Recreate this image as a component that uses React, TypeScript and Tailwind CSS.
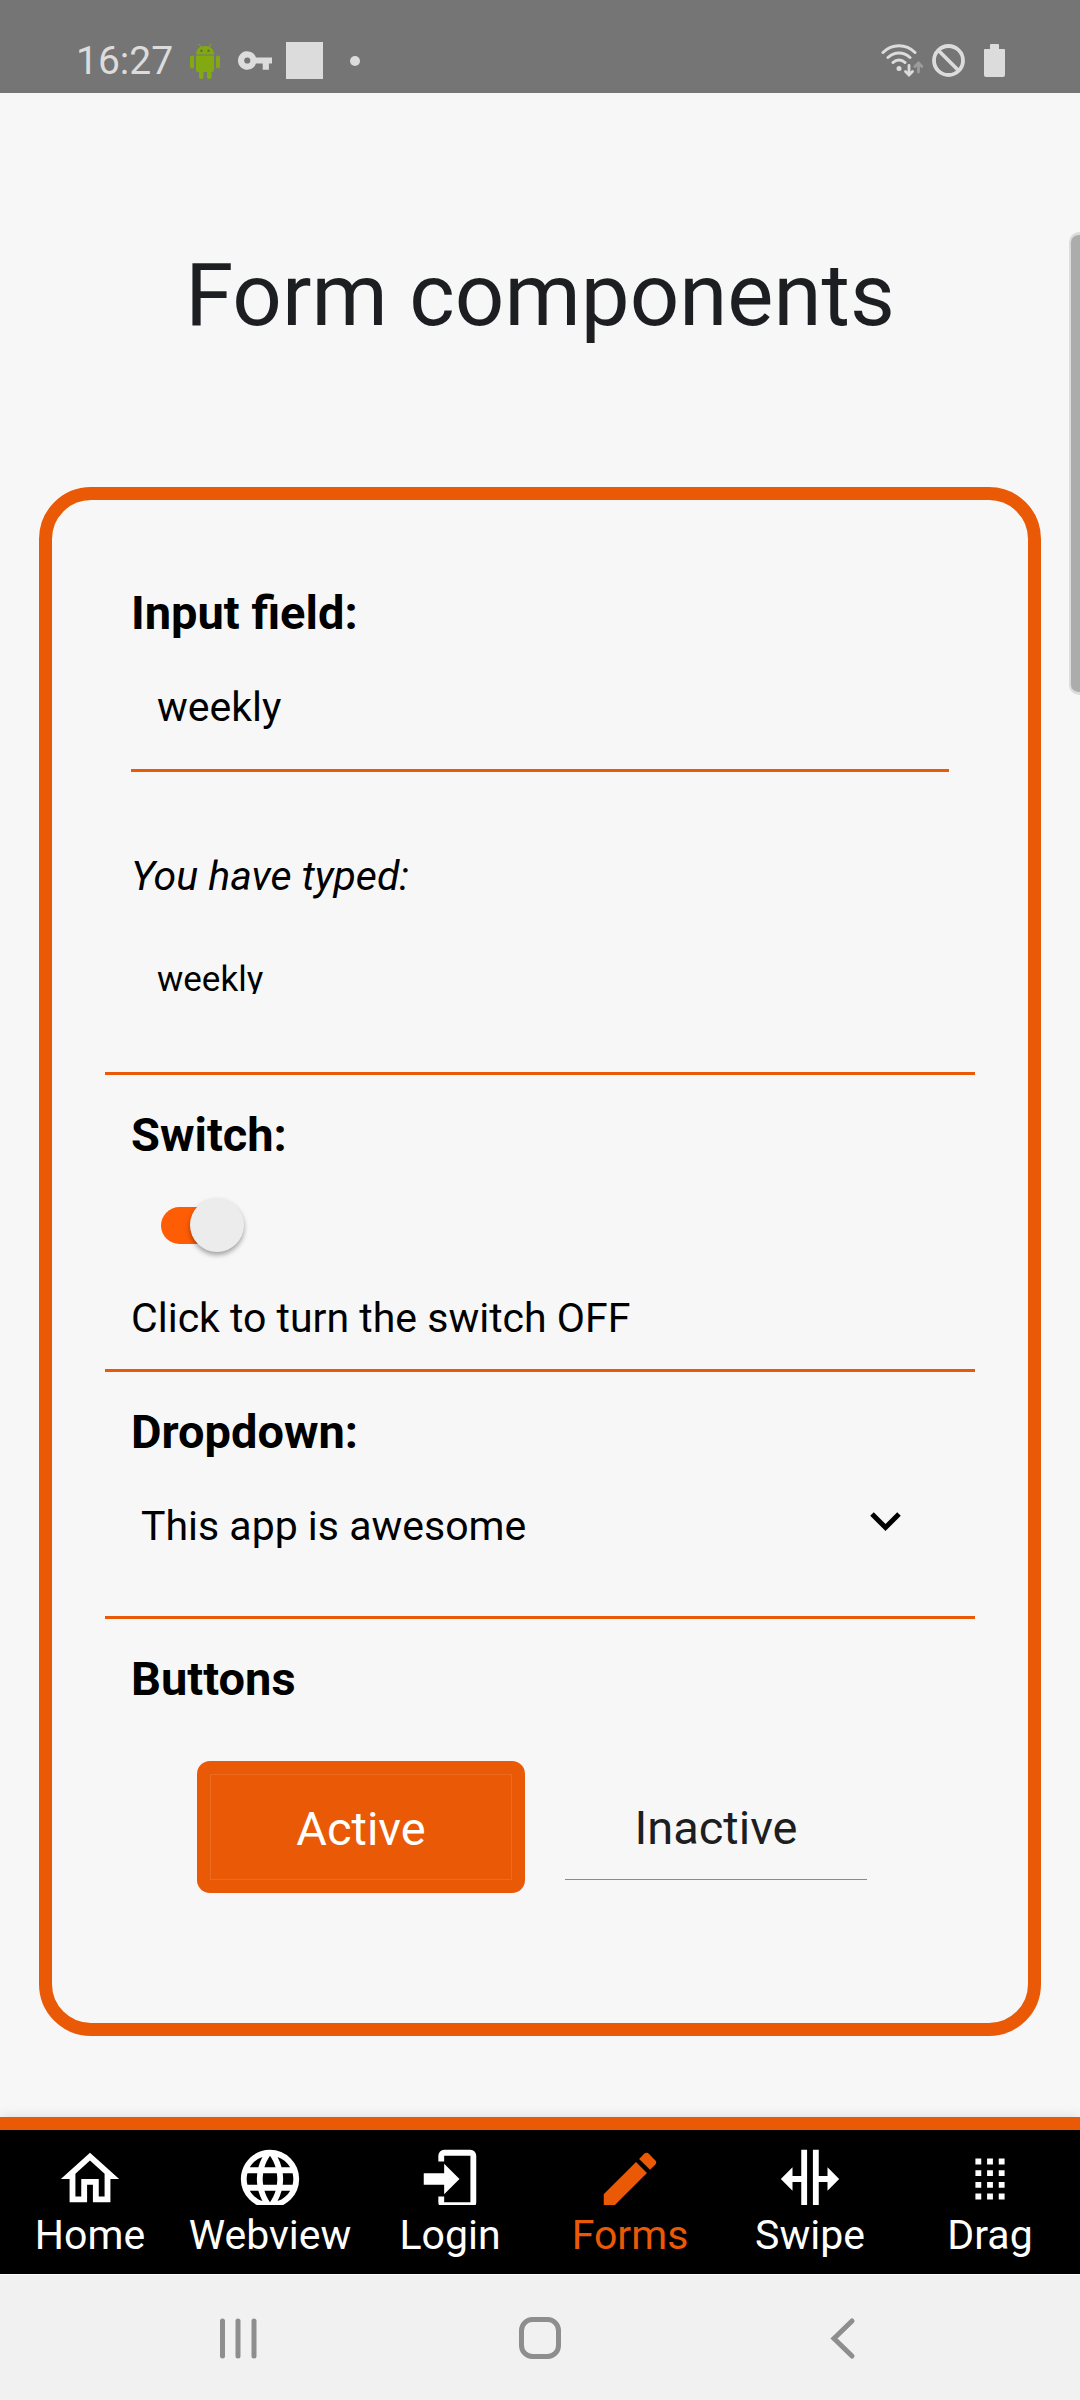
import { useState } from "react";
import type { ReactNode } from "react";

const tabs = [
  {
    label: "Home",
    path: "M12 5.69l5 4.5V18h-2v-6H9v6H7v-7.81l5-4.5M12 3L2 12h3v8h6v-6h2v6h6v-8h3L12 3z",
  },
  {
    label: "Webview",
    path: "M16.36,14C16.44,13.34 16.5,12.68 16.5,12C16.5,11.32 16.44,10.66 16.36,10H19.74C19.9,10.64 20,11.31 20,12C20,12.69 19.9,13.36 19.74,14M14.59,19.56C15.19,18.45 15.65,17.25 15.97,16H18.92C17.96,17.65 16.43,18.93 14.59,19.56M14.34,14H9.66C9.56,13.34 9.5,12.68 9.5,12C9.5,11.32 9.56,10.65 9.66,10H14.34C14.43,10.65 14.5,11.32 14.5,12C14.5,12.68 14.43,13.34 14.34,14M12,19.96C11.17,18.76 10.5,17.43 10.09,16H13.91C13.5,17.43 12.83,18.76 12,19.96M8,8H5.08C6.03,6.34 7.57,5.06 9.4,4.44C8.8,5.55 8.35,6.75 8,8M5.08,16H8C8.35,17.25 8.8,18.45 9.4,19.56C7.57,18.93 6.03,17.65 5.08,16M4.26,14C4.1,13.36 4,12.69 4,12C4,11.31 4.1,10.64 4.26,10H7.64C7.56,10.66 7.5,11.32 7.5,12C7.5,12.68 7.56,13.34 7.64,14M12,4.03C12.83,5.23 13.5,6.57 13.91,8H10.09C10.5,6.57 11.17,5.23 12,4.03M18.92,8H15.97C15.65,6.75 15.19,5.55 14.59,4.44C16.43,5.07 17.96,6.34 18.92,8M12,2C6.47,2 2,6.5 2,12A10,10 0 0,0 12,22A10,10 0 0,0 22,12A10,10 0 0,0 12,2Z",
  },
  {
    label: "Login",
    path: "M10,17.25V14H3V10H10V6.75L15.25,12L10,17.25M10,2H19A2,2 0 0,1 21,4V20A2,2 0 0,1 19,22H10A2,2 0 0,1 8,20V18H10V20H19V4H10V6H8V4A2,2 0 0,1 10,2Z",
  },
  {
    label: "Forms",
    path: "M20.71,7.04C21.1,6.65 21.1,6 20.71,5.63L18.37,3.29C18,2.9 17.35,2.9 16.96,3.29L15.12,5.12L18.87,8.87M3,17.25V21H6.75L17.81,9.93L14.06,6.18L3,17.25Z",
  },
  {
    label: "Swipe",
    path: "M18,16V13H15V22H13V2H15V11H18V8L22,12L18,16M2,12L6,16V13H9V22H11V2H9V11H6V8L2,12Z",
  },
  {
    label: "Drag",
    path: "M7 5h2v2H7zM11 5h2v2h-2zM15 5h2v2h-2zM7 9h2v2H7zM11 9h2v2h-2zM15 9h2v2h-2zM7 13h2v2H7zM11 13h2v2h-2zM15 13h2v2h-2zM7 17h2v2H7zM11 17h2v2h-2zM15 17h2v2h-2z",
  },
];

function StatusBar() {
  return (
    <header className="flex h-[93px] items-end justify-between bg-[#757575] pr-[75px] pb-[14px] pl-[76px] text-[#dcdcdc]">
      <div className="flex h-[37px] items-center">
        <span className="mr-[17px] text-[39px] leading-[40px]">16:27</span>
        <svg viewBox="0 0 30 36" className="mr-[18px] h-[36px] w-[30px]" fill="#82a910" aria-hidden="true">
          <path d="M6 11.5C6 6 10 3 15 3s9 3 9 8.500z" />
          <path d="M9 .8l2.500 4M21 .8l-2.500 4" stroke="#82a910" strokeWidth="1" />
          <circle cx="11.500" cy="7.800" r="1.200" fill="#5d6e3c" />
          <circle cx="18.500" cy="7.800" r="1.200" fill="#5d6e3c" />
          <path d="M6 12.500h18V27a2 2 0 0 1-2 2H8a2 2 0 0 1-2-2z" />
          <rect x="0" y="12.500" width="4" height="13" rx="2" />
          <rect x="26" y="12.500" width="4" height="13" rx="2" />
          <rect x="9" y="26" width="4.500" height="10" rx="2" />
          <rect x="17" y="26" width="4.500" height="10" rx="2" />
        </svg>
        <svg viewBox="1 6 22 12" className="mr-[14px] h-[19px] w-[34px]" fill="currentColor" aria-hidden="true">
          <path d="M12.650 10A6 6 0 1 0 12.650 14H17v4h4v-4h2v-4zM7 14a2 2 0 1 1 0-4 2 2 0 0 1 0 4z" />
        </svg>
        <span className="mr-[27px] size-[37px] bg-[#dcdcdc]" />
        <span className="size-[10px] rounded-full bg-[#dcdcdc]" />
      </div>
      <div className="flex h-[37px] items-center">
        <svg viewBox="0 0 42 33" className="mr-[9px] h-[33px] w-[42px]" fill="none" stroke="currentColor" strokeLinecap="round" aria-hidden="true">
          <path d="M2 8.500C11-.5 25-.5 34 8.500M7 13.500c6.500-6 15.500-6 22 0M12 18.500c3.500-3.500 8.500-3.500 12 0" strokeWidth="3" />
          <circle cx="18" cy="24.500" r="2.500" fill="currentColor" stroke="none" />
          <path d="M28 21.500v9M24.500 27.500l3.500 3.500 3.500-3.500" strokeWidth="2.800" />
          <path d="M37.500 28v-8M34 22.500l3.500-3.500 3.500 3.500" strokeWidth="2.800" stroke="#9c9c9c" />
        </svg>
        <svg viewBox="0 0 33 33" className="mr-[19px] size-[33px]" fill="none" stroke="currentColor" strokeWidth="3.800" aria-hidden="true">
          <circle cx="16.500" cy="16.500" r="14.500" />
          <path d="M6.500 6.500l20 20" />
        </svg>
        <svg viewBox="0 0 21 33" className="h-[33px] w-[21px]" fill="currentColor" aria-hidden="true">
          <path d="M6 5V1a1 1 0 0 1 1-1h7a1 1 0 0 1 1 1v4h5a1 1 0 0 1 1 1v25a2 2 0 0 1-2 2H2a2 2 0 0 1-2-2V6a1 1 0 0 1 1-1z" />
        </svg>
      </div>
    </header>
  );
}

function Section({ children, last = false }: { children: ReactNode; last?: boolean }) {
  return (
    <section className={last ? "px-[26px] pt-8 pb-[130px]" : "border-b-3 border-[#ea5906] px-[26px] pt-8"}>
      {children}
    </section>
  );
}

const labelClass = "block text-[47px] leading-[56px] font-bold";

export default function App() {
  const [text, setText] = useState("weekly");
  const [on, setOn] = useState(true);

  return (
    <div className="relative flex min-h-screen flex-col bg-[#f7f7f7] font-['Roboto',sans-serif] text-black">
      <StatusBar />
      <main className="flex-1 px-[39px] pt-[152px] pb-[81px]">
        <h1 className="text-center text-[87px] leading-[100px] text-[#1c1e21]">Form components</h1>
        <form
          className="mt-[142px] rounded-[52px] border-[13px] border-[#ea5906] px-[53px] pt-[53px]"
          onSubmit={(e) => e.preventDefault()}
        >
          <Section>
            <label htmlFor="field" className={labelClass}>
              Input field:
            </label>
            <input
              id="field"
              type="text"
              value={text}
              onChange={(e) => setText(e.target.value)}
              className="block h-[131px] w-full border-b-3 border-[#ea5906] px-[26px] pt-[3px] text-[41px] outline-none"
            />
            <p className="mt-20 text-[41px] leading-[48px] italic">You have typed:</p>
            <output
              htmlFor="field"
              className="mt-[58px] mb-[78px] block h-9 overflow-hidden px-[26px] text-[35px] leading-[44px]"
            >
              {text}
            </output>
          </Section>

          <Section>
            <label htmlFor="switch" className={labelClass}>
              Switch:
            </label>
            <span className="relative mt-[35px] ml-[30px] flex h-[54px] w-[83px] items-center">
              <input
                id="switch"
                type="checkbox"
                role="switch"
                checked={on}
                onChange={(e) => setOn(e.target.checked)}
                className="peer h-[37px] w-[78px] appearance-none rounded-full bg-gray-400 checked:bg-[#ff5c06]"
              />
              <span className="pointer-events-none absolute left-0 size-[54px] rounded-full bg-[#ececec] shadow-[0_3px_5px_rgba(0,0,0,0.35)] peer-checked:right-0 peer-checked:left-auto" />
            </span>
            <p className="mt-[42px] pb-[27px] text-[41px] leading-[48px]">
              Click to turn the switch {on ? "OFF" : "ON"}
            </p>
          </Section>

          <Section>
            <label htmlFor="dropdown" className={labelClass}>
              Dropdown:
            </label>
            <div className="relative mt-[31px] mb-[55px]">
              <select
                id="dropdown"
                className="block h-[70px] w-full appearance-none bg-transparent px-[10px] text-[41px] leading-[48px] outline-none"
              >
                <option>This app is awesome</option>
              </select>
              <svg
                viewBox="0 0 31 20"
                className="pointer-events-none absolute top-[21px] right-[48px] h-5 w-[31px]"
                fill="none"
                stroke="currentColor"
                strokeWidth="5"
                aria-hidden="true"
              >
                <path d="M2 2l13.500 13.500L29 2" />
              </svg>
            </div>
          </Section>

          <Section last>
            <h2 className={labelClass}>Buttons</h2>
            <div className="mt-[54px] flex justify-center gap-[27px] pr-[3px] text-[47px] leading-[56px]">
              <button
                type="button"
                className="h-[132px] w-[328px] rounded-[13px] bg-[#ea5906] p-[13px] text-white"
              >
                <span className="flex h-full items-center justify-center border border-[#ed6b20] pt-[3px]">Active</span>
              </button>
              <button type="button" className="h-[132px] w-[328px] p-[13px] text-[#1c1e21]">
                <span className="flex h-full items-center justify-center border-b border-[#ea6e2b] pt-[3px]">Inactive</span>
              </button>
            </div>
          </Section>
        </form>
      </main>

      <nav className="grid h-[157px] grid-cols-6 border-t-[13px] border-[#ea5906] bg-black shadow-[0_0_12px_rgba(0,0,0,0.12)]">
        {tabs.map((tab) => (
          <a
            key={tab.label}
            href={"#" + tab.label.toLowerCase()}
            className={
              tab.label === "Forms"
                ? "flex flex-col items-center pt-[14px] text-[#ea5906]"
                : "flex flex-col items-center pt-[14px] text-white"
            }
          >
            <span className="h-[61px] overflow-hidden">
              <svg viewBox="0 0 24 24" className="size-[70px]" fill="currentColor" aria-hidden="true">
                <path d={tab.path} />
              </svg>
            </span>
            <span className="mt-[6px] text-[41px] leading-[48px]">{tab.label}</span>
          </a>
        ))}
      </nav>

      <footer className="flex h-[126px] items-center justify-between border-t border-white bg-[#f1f1f1] px-[213px] text-[#8e8e8e]">
        <button type="button" aria-label="Recent apps">
          <svg viewBox="0 0 50 50" className="size-[50px]" fill="none" stroke="currentColor" strokeWidth="5" strokeLinecap="round">
            <path d="M9.500 8v35M25 8v35M41 8v35" />
          </svg>
        </button>
        <button type="button" aria-label="Home screen">
          <svg viewBox="0 0 50 50" className="size-[50px]" fill="none" stroke="currentColor" strokeWidth="5">
            <rect x="6.500" y="6.500" width="37" height="37" rx="11" />
          </svg>
        </button>
        <button type="button" aria-label="Back">
          <svg viewBox="0 0 50 50" className="size-[50px]" fill="none" stroke="currentColor" strokeWidth="5" strokeLinecap="round">
            <path d="M35 8L17 25.500 35 43" />
          </svg>
        </button>
      </footer>

      <div className="absolute top-[232px] right-0 h-[463px] w-[11px] rounded-l-[10px] border-y-3 border-l-2 border-[#dcdcdc] bg-[#acacac]" />
    </div>
  );
}
